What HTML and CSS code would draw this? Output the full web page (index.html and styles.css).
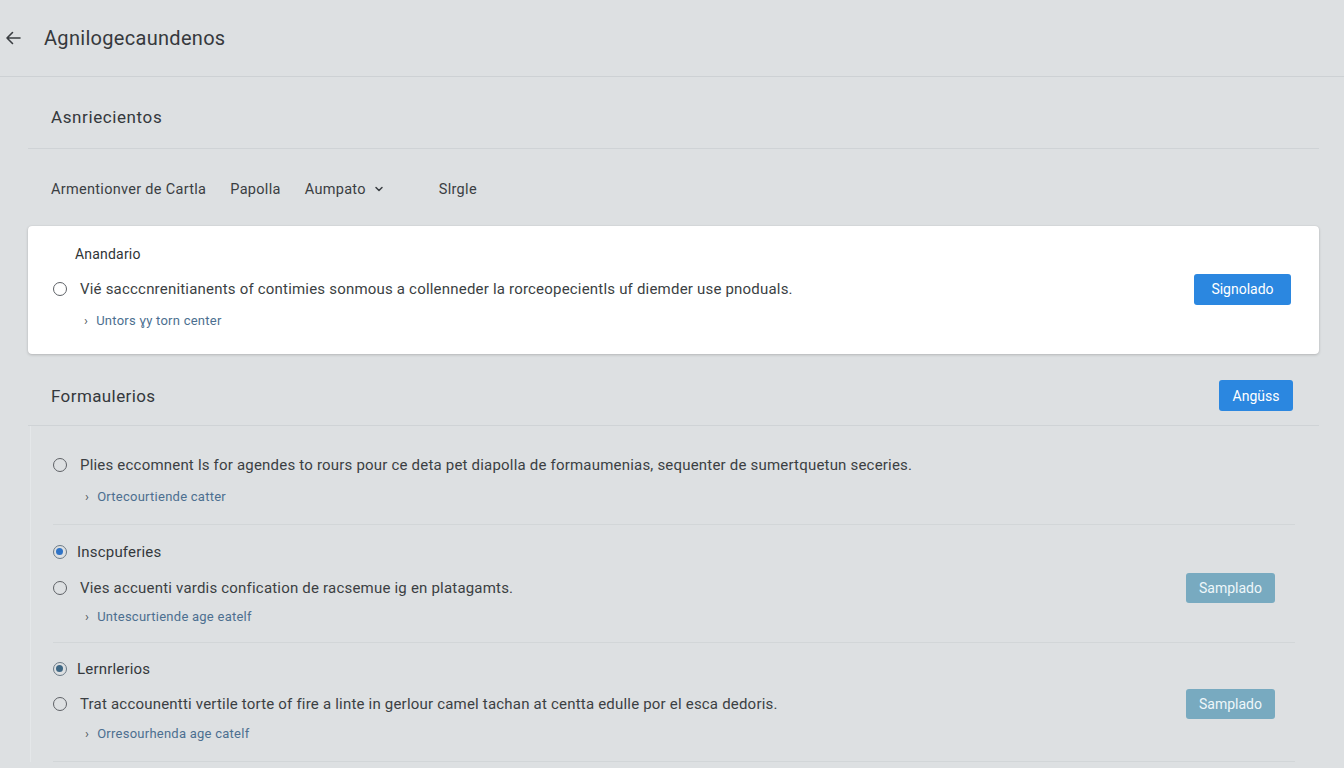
FILE: index.html
```html
<!DOCTYPE html>
<html lang="es">
<head>
<meta charset="utf-8">
<title>Agnilogecaundenos</title>
<link rel="stylesheet" href="styles.css">
</head>
<body>
<header class="topbar">
  <button class="back" aria-label="Atrás">
    <svg width="18" height="18" viewBox="0 0 18 18"><path d="M16 9H3M8.5 3.5L3 9l5.5 5.5" fill="none" stroke="#3a3e42" stroke-width="1.6" stroke-linecap="round" stroke-linejoin="round"/></svg>
  </button>
  <h1 class="title">Agnilogecaundenos</h1>
</header>
<main class="main">
  <div class="section-head first">
    <h2 class="section-title">Asnriecientos</h2>
  </div>
  <div class="filters">
    <span class="filter">Armentionver de Cartla</span>
    <span class="filter">Papolla</span>
    <span class="filter select">Aumpato
      <svg width="10" height="10" viewBox="0 0 10 10"><path d="M2 3.5l3 3 3-3" fill="none" stroke="#3a3e42" stroke-width="1.5" stroke-linecap="round" stroke-linejoin="round"/></svg>
    </span>
    <span class="filter single">Slrgle</span>
  </div>

  <section class="card">
    <div class="card-title">Anandario</div>
    <div class="line card-line">
      <span class="radio"></span>
      <span class="line-text">Vié sacccnrenitianents of contimies sonmous a collenneder la rorceopecientls uf diemder use pnoduals.</span>
      <button class="btn btn-primary btn-lg">Signolado</button>
    </div>
    <div class="link-row"><span class="chev">›</span><span class="link">Untors ɣy torn center</span></div>
  </section>

  <div class="section-head second">
    <h2 class="section-title">Formaulerios</h2>
    <button class="btn btn-primary btn-md">Angüss</button>
  </div>

  <div class="list">
    <div class="group g1">
      <div class="line">
        <span class="radio"></span>
        <span class="line-text">Plies eccomnent ls for agendes to rours pour ce deta pet diapolla de formaumenias, sequenter de sumertquetun seceries.</span>
      </div>
      <div class="link-row"><span class="chev">›</span><span class="link">Ortecourtiende catter</span></div>
    </div>
    <div class="group g2">
      <div class="group-title"><span class="radio checked"></span><span>Inscpuferies</span></div>
      <div class="line btn-line">
        <span class="radio"></span>
        <span class="line-text">Vies accuenti vardis confication de racsemue ig en platagamts.</span>
        <button class="btn btn-muted">Samplado</button>
      </div>
      <div class="link-row"><span class="chev">›</span><span class="link">Untescurtiende age eatelf</span></div>
    </div>
    <div class="group g3">
      <div class="group-title"><span class="radio checked dark"></span><span>Lernrlerios</span></div>
      <div class="line btn-line">
        <span class="radio"></span>
        <span class="line-text">Trat accounentti vertile torte of fire a linte in gerlour camel tachan at centta edulle por el esca dedoris.</span>
        <button class="btn btn-muted">Samplado</button>
      </div>
      <div class="link-row"><span class="chev">›</span><span class="link">Orresourhenda age catelf</span></div>
    </div>
  </div>
</main>
</body>
</html>
```
FILE: styles.css
```css
* { box-sizing: border-box; }
html, body { margin: 0; padding: 0; }
body {
  background: #dde0e2;
  font-family: Roboto, "Liberation Sans", Arial, sans-serif;
  color: #3a3e43;
  width: 1344px;
  height: 768px;
  overflow: hidden;
}
button { font-family: inherit; }

.topbar {
  height: 77px;
  display: flex;
  align-items: center;
  border-bottom: 1px solid #cdd1d4;
  padding-left: 3px;
}
.back {
  width: 20px; height: 20px;
  padding: 0; border: 0; background: none;
  display: flex; align-items: center; justify-content: center;
}
.title {
  margin: 0 0 0 21px;
  font-size: 20px;
  font-weight: 400;
  color: #36393d;
  letter-spacing: 0.3px;
}

.main { padding: 0 25px 0 28px; }

.section-head {
  display: flex;
  align-items: center;
  justify-content: space-between;
  border-bottom: 1px solid #cfd3d6;
  padding-left: 23px;
}
.section-head.first { height: 72px; padding-top: 9px; }
.section-head.second { height: 72px; padding-top: 12px; padding-right: 26px; }
.section-title {
  margin: 0;
  font-size: 17px;
  font-weight: 400;
  color: #34383c;
}
.first .section-title { letter-spacing: 0.6px; }
.second .section-title { letter-spacing: 0.4px; }

.filters {
  height: 77px;
  display: flex;
  align-items: center;
  padding-left: 23px;
  padding-top: 3px;
  font-size: 14.5px;
  letter-spacing: 0.3px;
  color: #3a3e42;
}
.filter { margin-right: 24px; }
.filter.select { display: inline-flex; align-items: center; gap: 8px; margin-right: 55px; }

.card {
  background: #ffffff;
  border-radius: 4px;
  box-shadow: 0 1px 3px rgba(0,0,0,0.18), 0 0 1px rgba(0,0,0,0.12);
  padding: 18px 28px 24px 25px;
  height: 128px;
}
.card-title {
  height: 20px;
  line-height: 20px;
  font-size: 14px;
  padding-left: 22px;
  color: #2f3336;
  letter-spacing: 0.2px;
}

.line {
  display: flex;
  align-items: center;
  font-size: 15px;
  color: #3b3f43;
  letter-spacing: 0.2px;
}
.card-line { height: 32px; margin-top: 9px; }
.line-text { flex: 1; margin-left: 13px; white-space: nowrap; }

.radio {
  width: 14px; height: 14px;
  border: 1.4px solid #5d6166;
  border-radius: 50%;
  flex: none;
  position: relative;
}
.radio.checked { border-color: #6b7a86; }
.radio.checked::after {
  content: "";
  position: absolute;
  left: 2px; top: 2px;
  width: 7px; height: 7px;
  border-radius: 50%;
  background: #2f73c6;
}
.radio.checked.dark::after { background: #3e6784; }

.link-row {
  height: 20px;
  display: flex;
  align-items: center;
  padding-left: 31px;
  font-size: 13px;
  letter-spacing: 0.25px;
}
.card .link-row { margin-top: 5px; }
.chev { color: #555b60; font-size: 13px; margin-right: 8px; }
.link { color: #4c6f90; }

.btn {
  border: 0;
  border-radius: 3px;
  color: #ffffff;
  font-size: 14px;
  padding: 0;
  flex: none;
  letter-spacing: 0;
}
.btn-primary { background: #2b87e0; }
.btn-lg { width: 97px; height: 31px; }
.btn-md { width: 74px; height: 31px; }
.btn-muted {
  background: #78aac0;
  color: #eef7fa;
  width: 89px;
  height: 30px;
}

.list {
  padding: 0 24px 0 22px;
  border-left: 1px solid #e4e7e9;
  margin-left: 2px;
}
.group { border-bottom: 1px solid #d2d6d8; }
.group .link-row { padding-left: 32px; }
.g1 { height: 99px; padding-top: 27px; }
.g1 .line { height: 24px; }
.g1 .link-row { margin-top: 9px; }
.g2 { height: 118px; padding-top: 15px; }
.g3 { height: 119px; padding-top: 14px; }
.group-title {
  height: 24px;
  display: flex;
  align-items: center;
  font-size: 15px;
  color: #34383c;
  gap: 10px;
  letter-spacing: 0.2px;
}
.btn-line { height: 30px; margin-top: 9px; padding-right: 20px; }
.g3 .btn-line { margin-top: 8px; }
.g2 .link-row { margin-top: 3px; }
.g3 .link-row { margin-top: 4px; }
```
